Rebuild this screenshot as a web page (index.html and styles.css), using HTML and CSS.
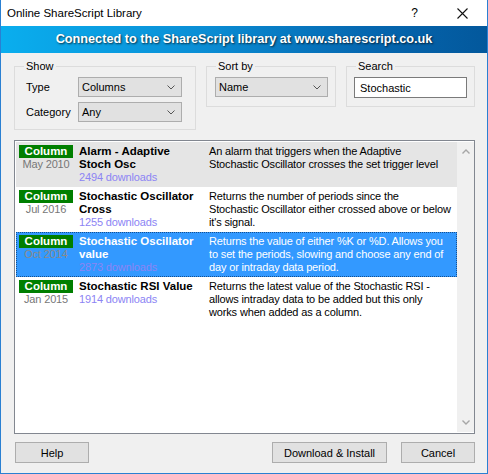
FILE: index.html
```html
<!DOCTYPE html>
<html lang="en">
<head>
    <meta charset="UTF-8">
    <title>Online ShareScript Library</title>
    <link rel="stylesheet" href="styles.css">
</head>
<body>
    <div class="window">
        <!-- title bar -->
        <div class="titlebar">
            <span class="title">Online ShareScript Library</span>
            <span class="help-icon">?</span>
            <span class="close-icon">
                <svg width="11" height="11" viewBox="0 0 11 11"><path d="M0.5 0.5 L10.5 10.5 M10.5 0.5 L0.5 10.5" stroke="#111" stroke-width="1.1" fill="none"/></svg>
            </span>
        </div>

        <div class="banner">Connected to the ShareScript library at www.sharescript.co.uk</div>

        <div class="panel">
            <!-- filters -->
            <div class="filters">
                <fieldset class="group show-group">
                    <legend>Show</legend>
                    <div class="field">
                        <label>Type</label>
                        <div class="select">
                            <span>Columns</span>
                            <svg class="chevron" width="8" height="5" viewBox="0 0 8 5"><path d="M0.5 0.5 L4 4 L7.5 0.5" stroke="#555" stroke-width="1" fill="none"/></svg>
                        </div>
                    </div>
                    <div class="field">
                        <label>Category</label>
                        <div class="select">
                            <span>Any</span>
                            <svg class="chevron" width="8" height="5" viewBox="0 0 8 5"><path d="M0.5 0.5 L4 4 L7.5 0.5" stroke="#555" stroke-width="1" fill="none"/></svg>
                        </div>
                    </div>
                </fieldset>
                <fieldset class="group sort-group">
                    <legend>Sort by</legend>
                    <div class="select wide">
                        <span>Name</span>
                        <svg class="chevron" width="8" height="5" viewBox="0 0 8 5"><path d="M0.5 0.5 L4 4 L7.5 0.5" stroke="#555" stroke-width="1" fill="none"/></svg>
                    </div>
                </fieldset>
                <fieldset class="group search-group">
                    <legend>Search</legend>
                    <input class="search-input" type="text" value="Stochastic">
                </fieldset>
            </div>

            <!-- script list -->
            <div class="script-list">
                <div class="rows">
                    <div class="row hover">
                        <div class="meta">
                            <span class="badge">Column</span>
                            <span class="date">May 2010</span>
                        </div>
                        <div class="name">
                            <b>Alarm - Adaptive Stoch Osc</b>
                            <span class="downloads">2494 downloads</span>
                        </div>
                        <div class="desc">An alarm that triggers when the Adaptive<br>Stochastic Oscillator crosses the set trigger level</div>
                    </div>
                    <div class="row">
                        <div class="meta">
                            <span class="badge">Column</span>
                            <span class="date">Jul 2016</span>
                        </div>
                        <div class="name">
                            <b>Stochastic Oscillator Cross</b>
                            <span class="downloads">1255 downloads</span>
                        </div>
                        <div class="desc">Returns the number of periods since the<br>Stochastic Oscillator either crossed above or below<br>it's signal.</div>
                    </div>
                    <div class="row selected">
                        <div class="meta">
                            <span class="badge">Column</span>
                            <span class="date">Oct 2014</span>
                        </div>
                        <div class="name">
                            <b>Stochastic Oscillator value</b>
                            <span class="downloads">2873 downloads</span>
                        </div>
                        <div class="desc">Returns the value of either %K or %D. Allows you<br>to set the periods, slowing and choose any end of<br>day or intraday data period.</div>
                    </div>
                    <div class="row">
                        <div class="meta">
                            <span class="badge">Column</span>
                            <span class="date">Jan 2015</span>
                        </div>
                        <div class="name">
                            <b>Stochastic RSI Value</b>
                            <span class="downloads">1914 downloads</span>
                        </div>
                        <div class="desc">Returns the latest value of the Stochastic RSI -<br>allows intraday data to be added but this only<br>works when added as a column.</div>
                    </div>
                </div>
                <div class="scrollbar">
                    <svg width="8" height="5" viewBox="0 0 8 5"><path d="M0.5 4.5 L4 1 L7.5 4.5" stroke="#a6a6a6" stroke-width="1.4" fill="none"/></svg>
                    <svg width="8" height="5" viewBox="0 0 8 5"><path d="M0.5 0.5 L4 4 L7.5 0.5" stroke="#a6a6a6" stroke-width="1.4" fill="none"/></svg>
                </div>
            </div>

            <!-- buttons -->
            <div class="buttons">
                <button class="btn help-btn">Help</button>
                <button class="btn install-btn">Download &amp; Install</button>
                <button class="btn cancel-btn">Cancel</button>
            </div>
        </div>
    </div>
</body>
</html>
```

FILE: styles.css
```css
body {
    margin: 0;
    background-color: #ffffff;
    font-family: "Liberation Sans", Arial, sans-serif;
}

.window {
    width: 488px;
    height: 474px;
    box-sizing: border-box;
    border: 1px solid #2a80d2;
    border-top: 0;
    display: flex;
    flex-direction: column;
    background-color: #f0f0f0;
}

/* title bar */
.titlebar {
    height: 26px;
    display: flex;
    align-items: center;
    padding-left: 6px;
    background-color: #ffffff;
    font-size: 11.5px;
    color: #000;
}

.title {
    flex: 1;
}

.help-icon {
    font-size: 12px;
    margin-right: 39px;
}

.close-icon {
    display: flex;
    margin-right: 19px;
}

/* blue banner */
.banner {
    height: 27px;
    line-height: 27px;
    text-align: center;
    color: #ffffff;
    font-weight: bold;
    font-size: 12.7px;
    text-shadow: 1px 1px 2px rgba(0, 0, 0, 0.7);
    background: linear-gradient(to right, #0aaeee 0%, #0a8fd6 40%, #0567b0 75%, #03589c 100%);
}

.panel {
    flex: 1;
    display: flex;
    flex-direction: column;
    padding: 6px 12px 0 13px;
    font-size: 11px;
    color: #000;
}

/* group boxes */
.filters {
    display: flex;
    align-items: flex-start;
    gap: 10px;
}

.group {
    margin: 0;
    border: 1px solid #dcdcdc;
    padding: 4px 6px 9px 7px;
    box-sizing: border-box;
}

.group legend {
    padding: 0 2px;
    margin-left: 2px;
    line-height: 14px;
}

.show-group {
    width: 182px;
    padding-bottom: 7px;
}

.sort-group {
    width: 130px;
}

.search-group {
    width: 129px;
    padding-bottom: 8px;
}

.field {
    display: flex;
    align-items: center;
    padding-left: 4px;
}

.field + .field {
    margin-top: 5px;
}

.field label {
    width: 52px;
}

.select {
    width: 104px;
    height: 20px;
    box-sizing: border-box;
    border: 1px solid #adadad;
    background-color: #e1e1e1;
    display: flex;
    align-items: center;
    justify-content: space-between;
    padding: 0 6px 0 3px;
}

.select.wide {
    width: 113px;
    margin-left: 1px;
}

.search-input {
    width: 113px;
    height: 21px;
    box-sizing: border-box;
    border: 1px solid #7a7a7a;
    background-color: #ffffff;
    font-family: inherit;
    font-size: 11px;
    padding: 0 5px;
    margin: 0;
    outline: none;
}

/* list */
.script-list {
    margin-top: 10px;
    height: 294px;
    box-sizing: border-box;
    border: 1px solid #828790;
    background-color: #ffffff;
    padding: 1px 0 1px 1px;
    display: flex;
}

.rows {
    flex: 1;
    font-size: 11px;
    line-height: 13px;
    letter-spacing: -0.15px;
}

.row {
    display: grid;
    grid-template-columns: 54px 126px 1fr;
    gap: 6px;
    height: 45px;
    box-sizing: border-box;
    padding: 3px 2px 0 3px;
}

.row.hover {
    background-color: #e5e5e5;
}

.row.selected {
    background-color: #3399ff;
    outline: 1px dotted #16508f;
    outline-offset: -1px;
    color: #ffffff;
}

.meta {
    display: flex;
    flex-direction: column;
    align-items: center;
}

.badge {
    width: 54px;
    height: 13px;
    background-color: #007f00;
    color: #ffffff;
    font-weight: bold;
    font-size: 11.5px;
    letter-spacing: 0;
    text-align: center;
}

.date {
    color: #777777;
}

.selected .date {
    color: #8a8a8a;
}

.name b {
    display: block;
    font-size: 11.5px;
    letter-spacing: 0;
}

.downloads {
    color: #8c84f4;
}

.desc {
    margin-left: -2px;
    white-space: nowrap;
}

.scrollbar {
    width: 17px;
    background-color: #f0f0f0;
    display: flex;
    flex-direction: column;
    justify-content: space-between;
    align-items: center;
    padding: 7px 0;
    box-sizing: border-box;
}

/* buttons */
.buttons {
    display: flex;
    gap: 14px;
    margin-top: 8px;
    padding-left: 1px;
}

.btn {
    height: 21px;
    border: 1px solid #adadad;
    background-color: #e1e1e1;
    font-family: inherit;
    font-size: 11px;
    color: #000;
    padding: 0;
}

.help-btn {
    width: 74px;
    margin-right: auto;
}

.install-btn {
    width: 115px;
}

.cancel-btn {
    width: 74px;
}
```
